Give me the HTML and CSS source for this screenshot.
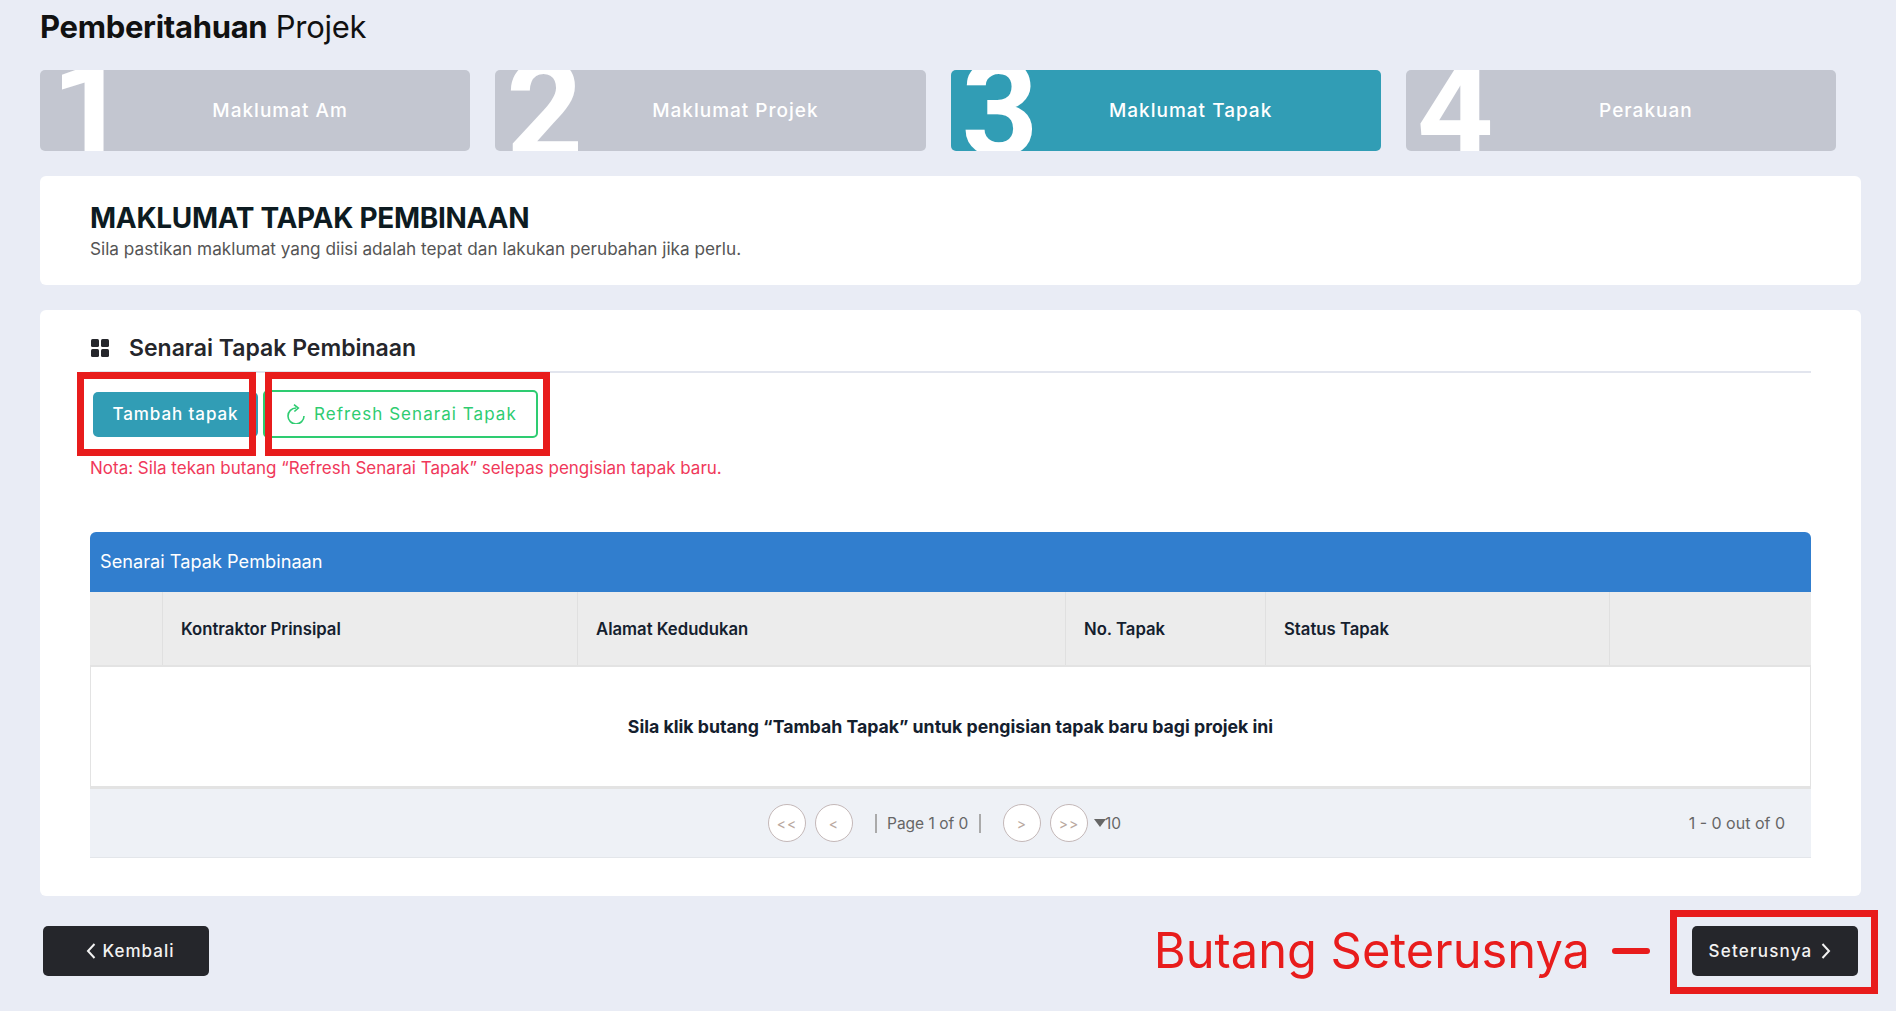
FILE: index.html
```html
<!DOCTYPE html>
<html lang="ms">
<head>
  <meta charset="UTF-8" />
  <title>Pemberitahuan Projek</title>
  <link rel="stylesheet" href="styles.css">
</head>
<body>
  <div class="page">
    <h1 class="page-title"><b>Pemberitahuan</b> Projek</h1>

    <div class="steps">
      <div class="step"><span class="step-no">1</span><span class="step-label">Maklumat Am</span></div>
      <div class="step"><span class="step-no">2</span><span class="step-label">Maklumat Projek</span></div>
      <div class="step active"><span class="step-no">3</span><span class="step-label">Maklumat Tapak</span></div>
      <div class="step"><span class="step-no">4</span><span class="step-label">Perakuan</span></div>
    </div>

    <div class="card intro">
      <h2>MAKLUMAT TAPAK PEMBINAAN</h2>
      <p>Sila pastikan maklumat yang diisi adalah tepat dan lakukan perubahan jika perlu.</p>
    </div>

    <div class="card list">
      <div class="list-title">
        <svg class="grid-icon" viewBox="0 0 18 18" fill="#25262b">
          <rect x="0" y="0" width="8" height="8" rx="1.5"/>
          <rect x="10" y="0" width="8" height="8" rx="1.5"/>
          <rect x="0" y="10" width="8" height="8" rx="1.5"/>
          <rect x="10" y="10" width="8" height="8" rx="1.5"/>
        </svg>
        <span>Senarai Tapak Pembinaan</span>
      </div>

      <div class="actions">
        <button class="btn-teal">Tambah tapak</button>
        <button class="btn-refresh">
          <svg class="refresh-icon" viewBox="0 0 18 20">
            <path d="M9 4a8 8 0 1 0 8 8"/>
            <path d="M7 .6 11.3 4 7.4 7.5"/>
          </svg>
          Refresh Senarai Tapak
        </button>
      </div>
      <p class="note">Nota: Sila tekan butang “Refresh Senarai Tapak” selepas pengisian tapak baru.</p>

      <div class="table">
        <div class="table-caption">Senarai Tapak Pembinaan</div>
        <div class="table-head">
          <div class="col col-check"></div>
          <div class="col col-kontraktor">Kontraktor Prinsipal</div>
          <div class="col col-alamat">Alamat Kedudukan</div>
          <div class="col col-no">No. Tapak</div>
          <div class="col col-status">Status Tapak</div>
          <div class="col col-end"></div>
        </div>
        <div class="table-empty">Sila klik butang “Tambah Tapak” untuk pengisian tapak baru bagi projek ini</div>
        <div class="pager">
          <div class="pager-main">
            <span class="pg-btn">&lt;&lt;</span>
            <span class="pg-btn">&lt;</span>
            <span class="pg-text">Page 1 of 0</span>
            <span class="pg-btn">&gt;</span>
            <span class="pg-btn">&gt;&gt;</span>
            <span class="pg-size"><i class="caret"></i>10</span>
          </div>
          <span class="pg-count">1 - 0 out of 0</span>
        </div>
      </div>
    </div>

    <div class="footer">
      <button class="btn-dark btn-back">
        <svg class="chev" viewBox="0 0 10 18"><path d="M8.5 2 2 9l6.5 7"/></svg>
        Kembali
      </button>
      <div class="footer-right">
        <span class="callout">Butang Seterusnya</span>
        <span class="callout-dash"></span>
        <button class="btn-dark btn-next">
          Seterusnya
          <svg class="chev" viewBox="0 0 10 18"><path d="M1.5 2 8 9l-6.5 7"/></svg>
        </button>
      </div>
    </div>
  </div>

  <!-- kotak merah anotasi -->
  <div class="mark mark-tambah"></div>
  <div class="mark mark-refresh"></div>
  <div class="mark mark-next"></div>
</body>
</html>
```

FILE: styles.css
```css
* {
  box-sizing: border-box;
}

html,
body {
  margin: 0;
  padding: 0;
}

body {
  position: relative;
  height: 1011px;
  overflow: hidden;
  background: #e9ecf5;
  font-family: Inter, "Liberation Sans", sans-serif;
  color: #25262b;
}

.page {
  padding: 0 35px 0 40px;
}

.page-title {
  margin: 0;
  height: 70px;
  padding-top: 9px;
  font-size: 31px;
  line-height: 36px;
  font-weight: 400;
  color: #111;
  letter-spacing: -0.3px;
}

.page-title b {
  font-weight: 700;
}

.steps {
  display: flex;
  gap: 25px;
  padding-right: 25px;
}

.step {
  flex: 1;
  display: flex;
  height: 81px;
  align-items: center;
  overflow: hidden;
  border-radius: 5px;
  background: #c3c6d0;
  color: #fff;
}

.step.active {
  background: #319db5;
}

.step-no {
  flex: 0 0 50px;
  min-width: 0;
  padding-left: 11px;
  font-family: Roboto, sans-serif;
  font-size: 134px;
  font-weight: 700;
  line-height: 81px;
  white-space: nowrap;
}

.step-label {
  flex: 1;
  text-align: center;
  font-size: 19px;
  letter-spacing: 1px;
  font-weight: 500;
}

.card {
  background: #fff;
  border-radius: 6px;
}

.intro {
  margin-top: 25px;
  height: 109px;
  padding: 26px 50px 0;
}

.intro h2 {
  margin: 0;
  font-size: 28px;
  line-height: 33px;
  font-weight: 700;
  color: #0d1b21;
  letter-spacing: -0.3px;
}

.intro p {
  margin: 3px 0 0;
  font-size: 17.2px;
  line-height: 22px;
  color: #555;
}

.list {
  margin-top: 25px;
  height: 586px;
  padding: 0 50px;
}

.list-title {
  display: flex;
  align-items: center;
  gap: 20px;
  height: 63px;
  padding-top: 15px;
  border-bottom: 2px solid #e2e5ee;
  font-size: 23px;
  font-weight: 600;
}

.grid-icon {
  width: 18px;
  height: 18px;
  margin-left: 1px;
}

.actions {
  display: flex;
  align-items: center;
  gap: 5px;
  height: 65px;
  padding: 17px 0 0 3px;
}

.btn-teal {
  width: 165px;
  height: 45px;
  border: 0;
  border-radius: 5px;
  background: #319db5;
  color: #fff;
  font: 500 17px Inter, sans-serif;
  letter-spacing: 0.9px;
}

.btn-refresh {
  display: flex;
  align-items: center;
  gap: 9px;
  width: 275px;
  height: 48px;
  padding-left: 22px;
  border: 2px solid #2ecc71;
  border-radius: 5px;
  background: #fff;
  color: #2ecc71;
  font: 400 17px Inter, sans-serif;
  letter-spacing: 1.05px;
}

.refresh-icon {
  width: 18px;
  height: 20px;
  fill: none;
  stroke: #2ecc71;
  stroke-width: 1.6;
}

.note {
  margin: 19px 0 0;
  font-size: 17px;
  line-height: 22px;
  color: #f0385a;
}

.table {
  margin-top: 53px;
}

.table-caption {
  height: 60px;
  padding: 0 10px;
  border-radius: 6px 6px 0 0;
  background: #317ece;
  color: #fff;
  font-size: 18.2px;
  line-height: 58px;
}

.table-head {
  display: flex;
  height: 75px;
  background: #ececec;
  border-bottom: 2px solid #e3e3e3;
  font-size: 16.7px;
  font-weight: 600;
  color: #14202e;
}

.col {
  display: flex;
  align-items: center;
  padding-left: 18px;
  border-right: 1px solid #e0e0e0;
}

.col-check { width: 73px; }
.col-kontraktor { width: 415px; }
.col-alamat { width: 488px; }
.col-no { width: 200px; }
.col-status { width: 344px; }
.col-end { flex: 1; border-right: 0; }

.table-empty {
  height: 122px;
  display: flex;
  align-items: center;
  justify-content: center;
  border: 1px solid #e3e3e3;
  border-width: 0 1px 3px;
  font-size: 17.7px;
  font-weight: 700;
  color: #14202e;
}

.pager {
  position: relative;
  display: flex;
  align-items: center;
  height: 69px;
  padding-right: 26px;
  background: #eef1f6;
  border-bottom: 1px solid #e3e6ea;
  color: #666;
  font-size: 16px;
}

.pager-main {
  display: flex;
  align-items: center;
  gap: 9px;
  margin-left: 678px;
}

.pg-btn {
  display: flex;
  align-items: center;
  justify-content: center;
  width: 38px;
  height: 38px;
  border: 1px solid #c4b8b8;
  border-radius: 50%;
  background: #fff;
  color: #b9a9a0;
  font-size: 14px;
  letter-spacing: 1px;
}

.pg-text {
  margin: 0 13px 0 13px;
  padding: 0 10px;
  border-left: 2px solid #aaa;
  border-right: 2px solid #aaa;
  font-size: 15.5px;
  line-height: 19px;
  width: 106px;
  white-space: nowrap;
}

.pg-size {
  display: flex;
  align-items: center;
  margin-left: -3px;
  font-size: 15.5px;
}

.caret {
  width: 0;
  height: 0;
  margin-right: -1px;
  border: 6px solid transparent;
  border-top: 8px solid #666;
  border-bottom: 0;
}

.pg-count {
  margin-left: auto;
}

.footer {
  display: flex;
  justify-content: space-between;
  align-items: center;
  margin-top: 30px;
  padding: 0 3px;
}

.footer-right {
  display: flex;
  align-items: center;
}

.btn-dark {
  display: flex;
  align-items: center;
  justify-content: center;
  gap: 7px;
  width: 166px;
  height: 50px;
  border: 0;
  border-radius: 5px;
  background: #25262b;
  color: #f2f2f2;
  font: 500 17px Inter, sans-serif;
  letter-spacing: 1px;
}

.btn-back {
  padding: 0 4px 0 12px;
}

.btn-next {
  gap: 9px;
  padding: 0 10px 0 0;
  letter-spacing: 1.2px;
}

.chev {
  width: 10px;
  height: 18px;
  fill: none;
  stroke: #f2f2f2;
  stroke-width: 2;
}

.callout {
  font-size: 48.8px;
  line-height: 50px;
  color: #e81c1c;
}

.callout-dash {
  width: 38px;
  height: 6px;
  margin: 0 42px 0 22px;
  border-radius: 3px;
  background: #e81c1c;
}

.mark {
  position: absolute;
  border: 7px solid #e81c1c;
}

.mark-tambah {
  left: 77px;
  top: 372px;
  width: 179px;
  height: 84px;
}

.mark-refresh {
  left: 265px;
  top: 372px;
  width: 285px;
  height: 84px;
}

.mark-next {
  left: 1670px;
  top: 910px;
  width: 208px;
  height: 84px;
}
```
